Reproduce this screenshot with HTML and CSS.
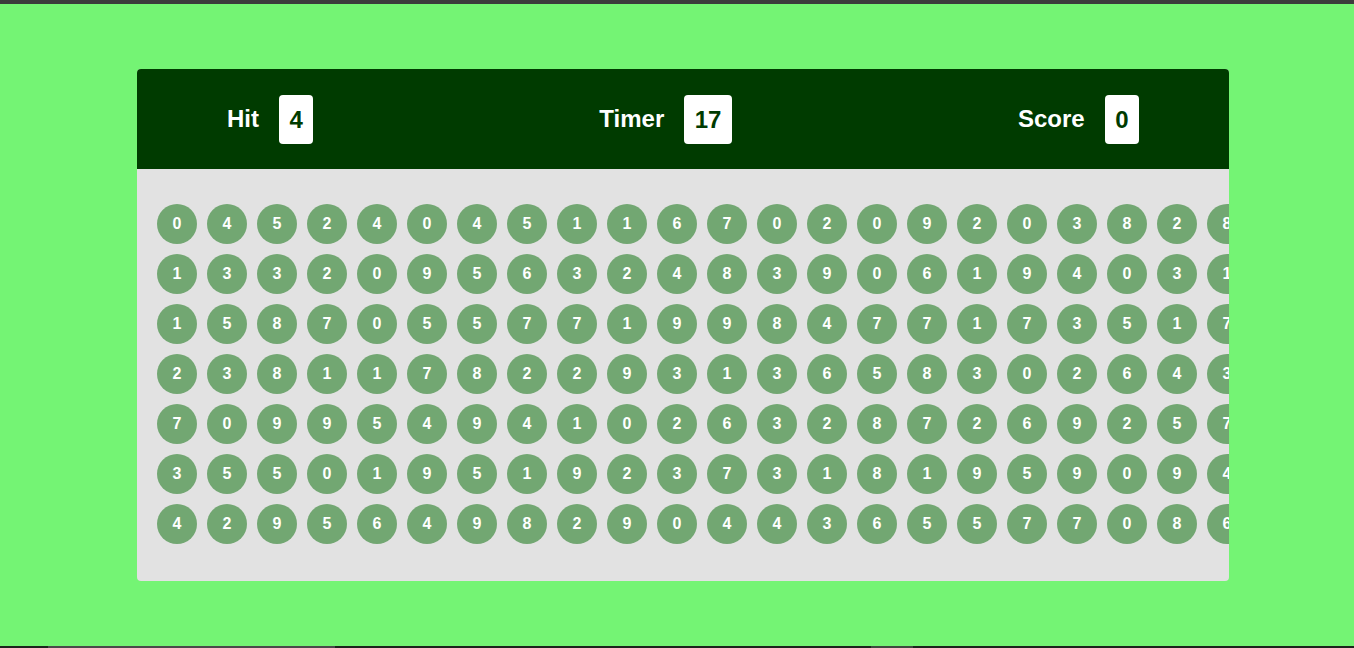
FILE: index.html
```html
<!DOCTYPE html>
<html lang="en">
<head>
<meta charset="utf-8">
<title>Bubble Game</title>
<link rel="stylesheet" href="styles.css">
</head>
<body>
<div class="topbar"></div>
<main class="stage">
  <section class="panel">
    <header class="panel-top">
      <div class="stat"><span class="stat-label">Hit</span><span class="stat-value">4</span></div>
      <div class="stat"><span class="stat-label">Timer</span><span class="stat-value">17</span></div>
      <div class="stat"><span class="stat-label">Score</span><span class="stat-value">0</span></div>
    </header>
    <div class="panel-bottom">
      <div class="bubbles">
        <div class="bubble">0</div><div class="bubble">4</div><div class="bubble">5</div><div class="bubble">2</div><div class="bubble">4</div><div class="bubble">0</div><div class="bubble">4</div><div class="bubble">5</div><div class="bubble">1</div><div class="bubble">1</div><div class="bubble">6</div><div class="bubble">7</div><div class="bubble">0</div><div class="bubble">2</div><div class="bubble">0</div><div class="bubble">9</div><div class="bubble">2</div><div class="bubble">0</div><div class="bubble">3</div><div class="bubble">8</div><div class="bubble">2</div><div class="bubble">8</div>
        <div class="bubble">1</div><div class="bubble">3</div><div class="bubble">3</div><div class="bubble">2</div><div class="bubble">0</div><div class="bubble">9</div><div class="bubble">5</div><div class="bubble">6</div><div class="bubble">3</div><div class="bubble">2</div><div class="bubble">4</div><div class="bubble">8</div><div class="bubble">3</div><div class="bubble">9</div><div class="bubble">0</div><div class="bubble">6</div><div class="bubble">1</div><div class="bubble">9</div><div class="bubble">4</div><div class="bubble">0</div><div class="bubble">3</div><div class="bubble">1</div>
        <div class="bubble">1</div><div class="bubble">5</div><div class="bubble">8</div><div class="bubble">7</div><div class="bubble">0</div><div class="bubble">5</div><div class="bubble">5</div><div class="bubble">7</div><div class="bubble">7</div><div class="bubble">1</div><div class="bubble">9</div><div class="bubble">9</div><div class="bubble">8</div><div class="bubble">4</div><div class="bubble">7</div><div class="bubble">7</div><div class="bubble">1</div><div class="bubble">7</div><div class="bubble">3</div><div class="bubble">5</div><div class="bubble">1</div><div class="bubble">7</div>
        <div class="bubble">2</div><div class="bubble">3</div><div class="bubble">8</div><div class="bubble">1</div><div class="bubble">1</div><div class="bubble">7</div><div class="bubble">8</div><div class="bubble">2</div><div class="bubble">2</div><div class="bubble">9</div><div class="bubble">3</div><div class="bubble">1</div><div class="bubble">3</div><div class="bubble">6</div><div class="bubble">5</div><div class="bubble">8</div><div class="bubble">3</div><div class="bubble">0</div><div class="bubble">2</div><div class="bubble">6</div><div class="bubble">4</div><div class="bubble">3</div>
        <div class="bubble">7</div><div class="bubble">0</div><div class="bubble">9</div><div class="bubble">9</div><div class="bubble">5</div><div class="bubble">4</div><div class="bubble">9</div><div class="bubble">4</div><div class="bubble">1</div><div class="bubble">0</div><div class="bubble">2</div><div class="bubble">6</div><div class="bubble">3</div><div class="bubble">2</div><div class="bubble">8</div><div class="bubble">7</div><div class="bubble">2</div><div class="bubble">6</div><div class="bubble">9</div><div class="bubble">2</div><div class="bubble">5</div><div class="bubble">7</div>
        <div class="bubble">3</div><div class="bubble">5</div><div class="bubble">5</div><div class="bubble">0</div><div class="bubble">1</div><div class="bubble">9</div><div class="bubble">5</div><div class="bubble">1</div><div class="bubble">9</div><div class="bubble">2</div><div class="bubble">3</div><div class="bubble">7</div><div class="bubble">3</div><div class="bubble">1</div><div class="bubble">8</div><div class="bubble">1</div><div class="bubble">9</div><div class="bubble">5</div><div class="bubble">9</div><div class="bubble">0</div><div class="bubble">9</div><div class="bubble">4</div>
        <div class="bubble">4</div><div class="bubble">2</div><div class="bubble">9</div><div class="bubble">5</div><div class="bubble">6</div><div class="bubble">4</div><div class="bubble">9</div><div class="bubble">8</div><div class="bubble">2</div><div class="bubble">9</div><div class="bubble">0</div><div class="bubble">4</div><div class="bubble">4</div><div class="bubble">3</div><div class="bubble">6</div><div class="bubble">5</div><div class="bubble">5</div><div class="bubble">7</div><div class="bubble">7</div><div class="bubble">0</div><div class="bubble">8</div><div class="bubble">6</div>
      </div>
    </div>
  </section>
</main>
<div class="bottombar"><span class="seg seg-a"></span><span class="seg seg-b"></span></div>
</body>
</html>
```
FILE: styles.css
```css
* { box-sizing: border-box; }
html, body { height: 100%; }
body {
  margin: 0;
  background: #74f474;
  font-family: "Liberation Sans", Arial, sans-serif;
  display: flex;
  flex-direction: column;
  overflow: hidden;
}
.topbar { height: 4px; background: #3c3c3c; flex: none; }
.stage {
  flex: 1;
  padding: 65px 0 0 137px;
}
.panel {
  width: 1092px;
  border-radius: 4px;
  overflow: hidden;
  background: #e2e2e2;
}
.panel-top {
  height: 100px;
  background: #003b00;
  display: flex;
  align-items: center;
  justify-content: space-between;
  padding: 0 90px 0 90px;
}
.stat { display: flex; align-items: center; gap: 20px; }
.stat-label { color: #fff; font-size: 24px; font-weight: 700; }
.stat-value {
  background: #fff;
  color: #003b00;
  font-size: 24px;
  font-weight: 700;
  padding: 11px 10.5px;
  border-radius: 4px;
  line-height: 27px;
}
.panel-bottom {
  padding: 35px 20px 37px;
  overflow: hidden;
}
.bubbles {
  display: grid;
  grid-template-columns: repeat(22, 40px);
  grid-auto-rows: 40px;
  gap: 10px;
}
.bubble {
  width: 40px;
  height: 40px;
  border-radius: 50%;
  background: #72a772;
  color: #fff;
  font-size: 16px;
  font-weight: 700;
  display: flex;
  align-items: center;
  justify-content: center;
}
.bottombar {
  height: 2px;
  flex: none;
  background: #1c241c;
  position: relative;
}
.seg { position: absolute; top: 0; height: 2px; background: #4a4a4a; }
.seg-a { left: 48px; width: 287px; }
.seg-b { left: 871px; width: 42px; background: #3e4a3e; }
```
